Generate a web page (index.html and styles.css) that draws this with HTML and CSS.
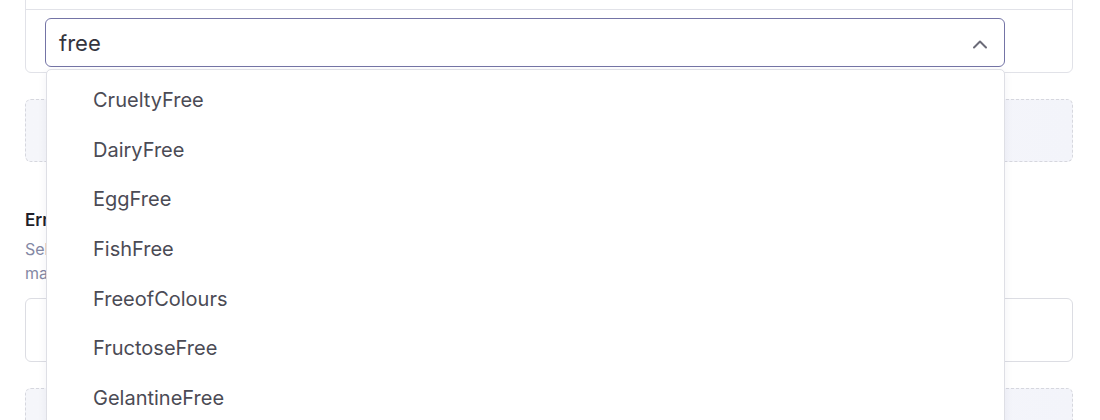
FILE: index.html
```html
<!DOCTYPE html>
<html>
<head>
<meta charset="utf-8">
<link rel="stylesheet" href="styles.css">
</head>
<body>
<div class="page">
  <div class="card">
    <div class="card-head"></div>
    <div class="card-body">
      <div class="select">
        <div class="select-input">
          <span class="select-value">free</span>
          <svg class="chevron" width="16" height="10" viewBox="0 0 16 10"><path d="M2 8.5 L8 2.5 L14 8.5" fill="none" stroke="#6b6b78" stroke-width="2" stroke-linecap="round" stroke-linejoin="round"/></svg>
        </div>
        <ul class="menu">
          <li>CrueltyFree</li>
          <li>DairyFree</li>
          <li>EggFree</li>
          <li>FishFree</li>
          <li>FreeofColours</li>
          <li>FructoseFree</li>
          <li>GelantineFree</li>
        </ul>
      </div>
    </div>
  </div>

  <div class="dropzone"></div>

  <div class="section">
    <h3 class="section-title">Ernährung</h3>
    <p class="section-desc">Select the nutritional characteristics<br>matching this product</p>
    <div class="field"></div>
    <div class="dropzone dropzone-low"></div>
  </div>
</div>
</body>
</html>
```

FILE: styles.css
```css
* { box-sizing: border-box; }
html, body { margin: 0; padding: 0; background: #ffffff; overflow: hidden; height: 420px; }
body { font-family: Inter, "Noto Sans", sans-serif; }

.page {
  padding-left: 25px;
  width: 1073px;
}

.card {
  margin-top: -40px;
  border: 1px solid #e1e2e8;
  border-radius: 6px;
  background: #fff;
}
.card-head {
  height: 49px;
  border-bottom: 1px solid #e1e2e8;
}
.card-body {
  padding: 8px 0 5px 19px;
}

.select {
  position: relative;
  width: 960px;
}
.select-input {
  height: 49px;
  border: 1.5px solid #7474a6;
  border-radius: 6px;
  display: flex;
  align-items: center;
  justify-content: space-between;
  padding: 0 16px 0 13px;
  background: #fff;
}
.select-value {
  font-size: 22px;
  color: #34343e;
}
.chevron { display: block; margin-top: 2px; }

.menu {
  position: absolute;
  top: 51px;
  left: 1px;
  right: 0;
  height: 400px;
  margin: 0;
  padding: 6px 0 0 0;
  list-style: none;
  background: #fff;
  border: 1px solid #dedfe5;
  border-radius: 5px;
  box-shadow: 0 2px 10px rgba(40, 40, 80, 0.06);
  z-index: 10;
  overflow: hidden;
}
.menu li {
  height: 49.7px;
  line-height: 49.7px;
  padding-left: 46px;
  font-size: 20px;
  color: #4b4b55;
  white-space: nowrap;
}

.dropzone {
  margin-top: 26px;
  height: 63px;
  border: 1px dashed #d6d7de;
  border-radius: 6px;
  background: linear-gradient(90deg, #f5f6fa 0%, #f7f8fc 60%, #f3f4fa 100%);
}

.section { margin-top: 46px; }
.section-title {
  margin: 0;
  font-size: 17px;
  font-weight: 600;
  color: #1f1f2a;
  line-height: 24px;
}
.section-desc {
  margin: 5px 0 0 0;
  font-size: 16px;
  line-height: 24px;
  color: #8488a4;
}
.field {
  margin-top: 13px;
  height: 64px;
  border: 1px solid #dcdde3;
  border-radius: 6px;
  background: #fff;
}
.dropzone-low { margin-top: 26px; }
```
